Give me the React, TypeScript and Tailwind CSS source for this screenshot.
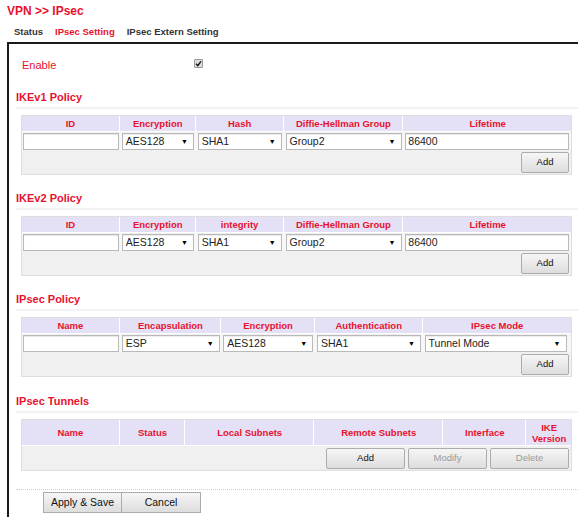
import React from "react";

const RED = "text-[#e8112d]";

function Select({ value, w }: { value: string; w: string }) {
    return (
        <div className={`relative h-[17px] ${w} border border-[#b9b9b9] bg-white text-[10.5px] leading-[15px] text-[#222] pl-[3px] shadow-[inset_0_1px_1px_rgba(0,0,0,0.08)]`}>
            {value}
            <span className="absolute right-[5px] top-[2px] text-[7px] leading-[12px] text-black">▼</span>
        </div>
    );
}

function TextBox({ value = "", w }: { value?: string; w: string }) {
    return (
        <div className={`h-[17px] ${w} border border-[#b9b9b9] bg-white text-[10.5px] leading-[15px] text-[#222] pl-[2px] shadow-[inset_0_1px_1px_rgba(0,0,0,0.1)]`}>
            {value}
        </div>
    );
}

function Btn({ children, w, dim = false }: { children: React.ReactNode; w: string; dim?: boolean }) {
    return (
        <button className={`h-[21px] ${w} border border-[#acacac] rounded-[2px] bg-gradient-to-b from-[#f6f6f6] to-[#dddddd] text-[9.5px] ${dim ? "text-[#9a9a9a]" : "text-[#111]"}`}>
            {children}
        </button>
    );
}

function SectionTitle({ children }: { children: React.ReactNode }) {
    return (
        <div className="ml-[7px]">
            <div className={`h-[16px] text-[11px] leading-[16px] font-bold ${RED}`}>{children}</div>
            <div className="mt-[2px] h-[2px] bg-[#f2f2f2]" />
        </div>
    );
}

type Col = { label: React.ReactNode; w: string };

function Grid({ cols, row, footer, headH = "h-[16px]" }: { cols: Col[]; row?: React.ReactNode[]; footer: React.ReactNode; headH?: string }) {
    return (
        <div className="ml-[12px] w-[551px] border border-[#dedede] bg-[#f0f0f0]">
            <div className={`flex ${headH} bg-[#e4e1f6] gap-[1px] border-b border-white`}>
                {cols.map((c, i) => (
                    <div key={i} className={`${c.w} flex items-center justify-center text-center text-[9.5px] leading-[11px] font-bold ${RED} border-r border-white last:border-r-0`}>
                        {c.label}
                    </div>
                ))}
            </div>
            {row && (
                <div className="flex h-[17px] mt-[1px] gap-[1px] bg-[#f7f7f7]">
                    {row.map((cell, i) => (
                        <div key={i} className={`${cols[i].w} flex items-center pl-[1px]`}>
                            {cell}
                        </div>
                    ))}
                </div>
            )}
            <div className="flex h-[24px] items-center justify-end pr-[2px] gap-[3px]">{footer}</div>
        </div>
    );
}

export default function App() {
    return (
        <div className="w-[578px] h-[517px] overflow-hidden bg-white font-['Liberation_Sans',Arial,sans-serif]">
            <div className={`pl-[7px] pt-[4px] h-[18px] text-[12px] leading-[15px] font-bold ${RED}`}>VPN &gt;&gt; IPsec</div>
            <div className="flex pl-[14px] pt-[8px] h-[22px] text-[9.5px] leading-[12px] font-bold text-[#333] gap-[12px]">
                <span>Status</span>
                <span className={RED}>IPsec Setting</span>
                <span>IPsec Extern Setting</span>
            </div>
            <div className="ml-[7px] mt-[2px] border-l-2 border-t-2 border-[#1a1a1a] h-[500px]">
                <div className="flex items-center h-[40px] pt-[2px]">
                    <span className={`ml-[13px] w-[172px] text-[11px] ${RED}`}>Enable</span>
                    <span className="w-[9px] h-[9px] border border-[#9a9a9a] bg-[#dcdcdc] flex items-center justify-center rounded-[1px] -mt-[3px]">
                        <svg viewBox="0 0 10 10" className="w-[7px] h-[7px]">
                            <path d="M1.5 5.5 L4 8 L8.5 2" fill="none" stroke="#111" strokeWidth="2" />
                        </svg>
                    </span>
                </div>

                <div className="mt-[5px]">
                    <SectionTitle>IKEv1 Policy</SectionTitle>
                    <div className="mt-[6px]">
                        <Grid
                            cols={[
                                { label: "ID", w: "w-[98px]" },
                                { label: "Encryption", w: "w-[75px]" },
                                { label: "Hash", w: "w-[87px]" },
                                { label: "Diffie-Hellman Group", w: "w-[119px]" },
                                { label: "Lifetime", w: "w-[167px]" },
                            ]}
                            row={[
                                <TextBox w="w-[96px]" />,
                                <Select value="AES128" w="w-[72px]" />,
                                <Select value="SHA1" w="w-[84px]" />,
                                <Select value="Group2" w="w-[116px]" />,
                                <TextBox value="86400" w="w-[164px]" />,
                            ]}
                            footer={<Btn w="w-[48px]">Add</Btn>}
                        />
                    </div>
                </div>

                <div className="mt-[15px]">
                    <SectionTitle>IKEv2 Policy</SectionTitle>
                    <div className="mt-[6px]">
                        <Grid
                            cols={[
                                { label: "ID", w: "w-[98px]" },
                                { label: "Encryption", w: "w-[75px]" },
                                { label: "integrity", w: "w-[87px]" },
                                { label: "Diffie-Hellman Group", w: "w-[119px]" },
                                { label: "Lifetime", w: "w-[167px]" },
                            ]}
                            row={[
                                <TextBox w="w-[96px]" />,
                                <Select value="AES128" w="w-[72px]" />,
                                <Select value="SHA1" w="w-[84px]" />,
                                <Select value="Group2" w="w-[116px]" />,
                                <TextBox value="86400" w="w-[164px]" />,
                            ]}
                            footer={<Btn w="w-[48px]">Add</Btn>}
                        />
                    </div>
                </div>

                <div className="mt-[15px]">
                    <SectionTitle>IPsec Policy</SectionTitle>
                    <div className="mt-[6px]">
                        <Grid
                            cols={[
                                { label: "Name", w: "w-[98px]" },
                                { label: "Encapsulation", w: "w-[101px]" },
                                { label: "Encryption", w: "w-[93px]" },
                                { label: "Authentication", w: "w-[107px]" },
                                { label: "IPsec Mode", w: "w-[148px]" },
                            ]}
                            row={[
                                <TextBox w="w-[96px]" />,
                                <Select value="ESP" w="w-[98px]" />,
                                <Select value="AES128" w="w-[90px]" />,
                                <Select value="SHA1" w="w-[104px]" />,
                                <Select value="Tunnel Mode" w="w-[142px]" />,
                            ]}
                            footer={<Btn w="w-[48px]">Add</Btn>}
                        />
                    </div>
                </div>

                <div className="mt-[16px]">
                    <SectionTitle>IPsec Tunnels</SectionTitle>
                    <div className="mt-[6px]">
                        <Grid
                            headH="h-[26px]"
                            cols={[
                                { label: "Name", w: "w-[98px]" },
                                { label: "Status", w: "w-[65px]" },
                                { label: "Local Subnets", w: "w-[128px]" },
                                { label: "Remote Subnets", w: "w-[129px]" },
                                { label: "Interface", w: "w-[82px]" },
                                { label: <>IKE<br />Version</>, w: "w-[44px]" },
                            ]}
                            footer={
                                <>
                                    <Btn w="w-[79px]">Add</Btn>
                                    <Btn w="w-[79px]" dim>Modify</Btn>
                                    <Btn w="w-[79px]" dim>Delete</Btn>
                                </>
                            }
                        />
                    </div>
                </div>

                <div className="ml-[7px] mt-[18px] border-t border-dotted border-[#cfcfcf]" />
                <div className="flex ml-[34px] mt-[2px]">
                    <button className="h-[21px] w-[79px] border border-[#acacac] bg-gradient-to-b from-[#f6f6f6] to-[#dddddd] text-[10.5px] text-[#111]">Apply &amp; Save</button>
                    <button className="h-[21px] w-[79px] border border-l-0 border-[#acacac] bg-gradient-to-b from-[#f6f6f6] to-[#dddddd] text-[10.5px] text-[#111]">Cancel</button>
                </div>
            </div>
        </div>
    );
}
